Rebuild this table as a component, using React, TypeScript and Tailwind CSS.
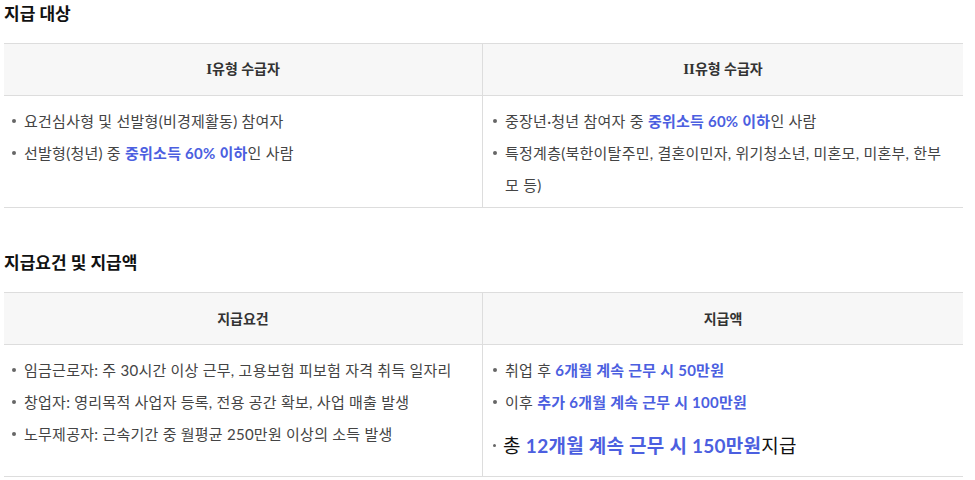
import React from "react";

type Part = { text: string; blue?: boolean };

const font = "font-['Lato','Noto_Sans_CJK_KR',sans-serif]";

function Bullet({ parts, big }: { parts: Part[]; big?: boolean }) {
  return (
    <li
      className={
        big
          ? "mt-[10px] flex items-start text-[19px] leading-[36px] tracking-[0.25px] text-[#111]"
          : "flex items-start text-[15px] leading-[32px] tracking-[0.25px] text-[#444]"
      }
    >
      <span
        className={
          big
            ? "mr-[7px] mt-[16px] h-[3px] w-[3px] shrink-0 rounded-full bg-[#666]"
            : "mr-[8px] mt-[14px] h-[4px] w-[4px] shrink-0 rounded-full bg-[#666]"
        }
      />
      <span>
        {parts.map((p, i) =>
          p.blue ? (
            <span key={i} className="font-bold text-[#4c5fe0]">
              {p.text}
            </span>
          ) : (
            <span key={i}>{p.text}</span>
          )
        )}
      </span>
    </li>
  );
}

function Table({
  heads,
  left,
  right,
}: {
  heads: [React.ReactNode, React.ReactNode];
  left: React.ReactNode;
  right: React.ReactNode;
}) {
  return (
    <div className="ml-[4px] w-[959px] border-y border-[#dddddd]">
      <div className="grid grid-cols-[479px_480px] border-b border-[#dddddd] bg-[#f7f7f7]">
        <div className="flex h-[51px] items-center justify-center border-r border-[#dddddd] text-[14px] font-bold text-[#333]">
          {heads[0]}
        </div>
        <div className="flex h-[51px] items-center justify-center text-[14px] font-bold text-[#333]">
          {heads[1]}
        </div>
      </div>
      <div className="grid grid-cols-[479px_480px]">
        <div className="border-r border-[#dddddd] pl-[8px] pr-[10px]">{left}</div>
        <div className="pl-[10px] pr-[12px]">{right}</div>
      </div>
    </div>
  );
}

const roman = "font-['Liberation_Serif',serif] text-[15px]";

export default function App() {
  return (
    <div className={`${font} min-h-screen bg-white pb-[8px]`}>
      <h2 className="pl-[4px] text-[17px] font-bold leading-[28px] text-[#111]">지급 대상</h2>
      <div className="mt-[15px]">
        <Table
          heads={[
            <span>
              <span className={roman}>I</span>유형 수급자
            </span>,
            <span>
              <span className={roman}>II</span>유형 수급자
            </span>,
          ]}
          left={
            <ul className="pt-[9px] pb-[6px]">
              <Bullet parts={[{ text: "요건심사형 및 선발형(비경제활동) 참여자" }]} />
              <Bullet
                parts={[
                  { text: "선발형(청년) 중 " },
                  { text: "중위소득 60% 이하", blue: true },
                  { text: "인 사람" },
                ]}
              />
            </ul>
          }
          right={
            <ul className="pt-[9px] pb-[6px]">
              <Bullet
                parts={[
                  { text: "중장년·청년 참여자 중 " },
                  { text: "중위소득 60% 이하", blue: true },
                  { text: "인 사람" },
                ]}
              />
              <Bullet
                parts={[
                  {
                    text: "특정계층(북한이탈주민, 결혼이민자, 위기청소년, 미혼모, 미혼부, 한부모 등)",
                  },
                ]}
              />
            </ul>
          }
        />
      </div>

      <h2 className="mt-[41px] pl-[4px] text-[17px] font-bold leading-[28px] text-[#111]">
        지급요건 및 지급액
      </h2>
      <div className="mt-[15px]">
        <Table
          heads={["지급요건", "지급액"]}
          left={
            <ul className="pt-[9px] pb-[10px]">
              <Bullet parts={[{ text: "임금근로자: 주 30시간 이상 근무, 고용보험 피보험 자격 취득 일자리" }]} />
              <Bullet parts={[{ text: "창업자: 영리목적 사업자 등록, 전용 공간 확보, 사업 매출 발생" }]} />
              <Bullet parts={[{ text: "노무제공자: 근속기간 중 월평균 250만원 이상의 소득 발생" }]} />
            </ul>
          }
          right={
            <ul className="pt-[9px] pb-[12px]">
              <Bullet parts={[{ text: "취업 후 " }, { text: "6개월 계속 근무 시 50만원", blue: true }]} />
              <Bullet parts={[{ text: "이후 " }, { text: "추가 6개월 계속 근무 시 100만원", blue: true }]} />
              <Bullet
                big
                parts={[
                  { text: "총 " },
                  { text: "12개월 계속 근무 시 150만원", blue: true },
                  { text: "지급" },
                ]}
              />
            </ul>
          }
        />
      </div>
    </div>
  );
}
